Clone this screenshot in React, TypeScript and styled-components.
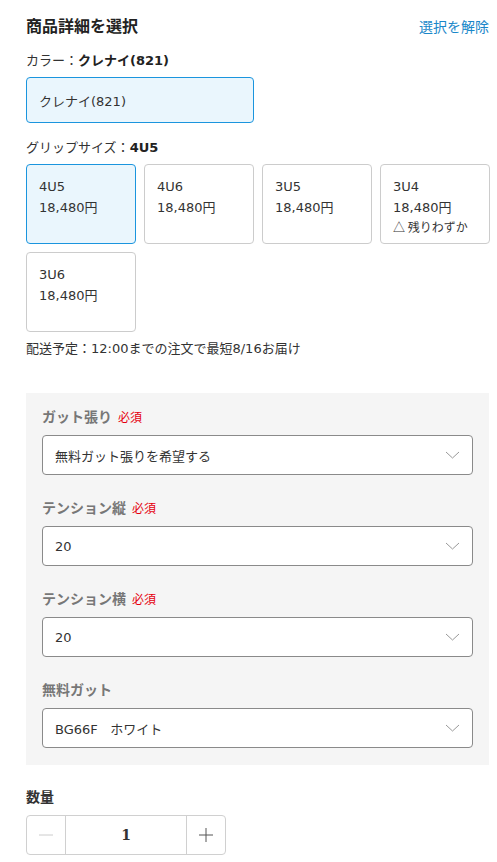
import React from "react";
import styled, { createGlobalStyle } from "styled-components";

const GlobalStyle = createGlobalStyle`
  html, body { margin: 0; padding: 0; background: #fff; }
  body {
    font-family: "DejaVu Sans", "Noto Sans CJK JP", sans-serif;
    color: #333;
    -webkit-font-smoothing: antialiased;
  }
  * { box-sizing: border-box; }
`;

const Page = styled.div`
  width: 497px;
  padding: 16px 8px 8px 26px;
`;

const Header = styled.div`
  display: flex;
  justify-content: space-between;
  align-items: center;
  height: 22px;
`;

const Title = styled.h2`
  margin: 0;
  font-size: 16px;
  line-height: 22px;
  font-weight: 700;
  color: #222;
`;

const ClearLink = styled.a`
  font-size: 14px;
  line-height: 22px;
  color: #1a87c9;
  text-decoration: none;
  cursor: pointer;
`;

const OptionLabel = styled.div<{ $mt: number }>`
  margin-top: ${(p) => p.$mt}px;
  font-size: 13px;
  line-height: 20px;
  color: #333;
  b {
    font-weight: 700;
    color: #222;
  }
`;

const ColorButton = styled.button<{ $selected?: boolean }>`
  display: flex;
  align-items: center;
  margin-top: 6px;
  width: 228px;
  height: 46px;
  padding: 0 12px;
  border: 1px solid ${(p) => (p.$selected ? "#1b95de" : "#ccc")};
  border-radius: 4px;
  background: ${(p) => (p.$selected ? "#eaf6fd" : "#fff")};
  font-family: inherit;
  font-size: 13px;
  color: #333;
  text-align: left;
`;

const CardGrid = styled.div`
  margin-top: 6px;
  display: grid;
  grid-template-columns: repeat(4, 110px);
  grid-auto-rows: 80px;
  gap: 8px;
`;

const Card = styled.div<{ $selected?: boolean }>`
  border: 1px solid ${(p) => (p.$selected ? "#1b95de" : "#ccc")};
  border-radius: 4px;
  background: ${(p) => (p.$selected ? "#eaf6fd" : "#fff")};
  padding: 12px 6px 0 12px;
  font-size: 13px;
  line-height: 19px;
  color: #333;
  display: flex;
  flex-direction: column;
`;

const CardLine = styled.span<{ $gap?: number }>`
  margin-top: ${(p) => p.$gap ?? 0}px;
  white-space: nowrap;
`;

const StockNote = styled.span`
  font-family: "Noto Sans CJK JP", sans-serif;
  font-size: 12px;
  line-height: 19px;
  white-space: nowrap;
`;

const Delivery = styled.div`
  margin-top: 7px;
  font-size: 13px;
  line-height: 20px;
  color: #333;
`;

const Panel = styled.div`
  margin-top: 34px;
  background: #f5f5f5;
  padding: 13px 16px 17px 16px;
  display: flex;
  flex-direction: column;
  gap: 22px;
`;

const Field = styled.div`
  display: flex;
  flex-direction: column;
`;

const FieldLabel = styled.div`
  display: flex;
  align-items: center;
  gap: 6px;
  height: 20px;
  font-size: 14px;
  font-weight: 700;
  color: #777;
`;

const Required = styled.span`
  font-size: 12px;
  font-weight: 400;
  color: #e5000f;
`;

const Select = styled.div`
  margin-top: 9px;
  height: 40px;
  display: flex;
  align-items: center;
  justify-content: space-between;
  padding: 0 12px 0 12px;
  background: #fff;
  border: 1px solid #8a8a8a;
  border-radius: 4px;
  font-size: 13px;
  color: #333;
  white-space: pre;
`;

const Chevron = styled.svg`
  width: 15px;
  height: 8px;
`;

const QtyLabel = styled.div`
  margin-top: 22px;
  font-size: 14px;
  line-height: 20px;
  font-weight: 700;
  color: #333;
`;

const Stepper = styled.div`
  margin-top: 8px;
  width: 200px;
  height: 40px;
  display: grid;
  grid-template-columns: 39px 1fr 39px;
  border: 1px solid #d0d0d0;
  border-radius: 4px;
  overflow: hidden;
`;

const StepButton = styled.div<{ $disabled?: boolean; $side: "left" | "right" }>`
  display: flex;
  align-items: center;
  justify-content: center;
  color: ${(p) => (p.$disabled ? "#ccc" : "#555")};
  ${(p) => (p.$side === "left" ? "border-right: 1px solid #d0d0d0;" : "border-left: 1px solid #d0d0d0;")}
`;

const QtyValue = styled.div`
  display: flex;
  align-items: center;
  justify-content: center;
  font-family: "DejaVu Serif", serif;
  font-size: 14px;
  font-weight: 700;
  color: #333;
`;

const ChevronIcon = () => (
  <Chevron viewBox="0 0 15 8">
    <polyline points="1,1 7.5,7 14,1" fill="none" stroke="#999" strokeWidth="1" />
  </Chevron>
);

const sizes = [
  { name: "4U5", price: "18,480円", selected: true },
  { name: "4U6", price: "18,480円" },
  { name: "3U5", price: "18,480円" },
  { name: "3U4", price: "18,480円", note: "△ 残りわずか" },
  { name: "3U6", price: "18,480円" },
];

const fields = [
  { label: "ガット張り", required: true, value: "無料ガット張りを希望する" },
  { label: "テンション縦", required: true, value: "20" },
  { label: "テンション横", required: true, value: "20" },
  { label: "無料ガット", required: false, value: "BG66F   ホワイト" },
];

export default function App() {
  return (
    <>
      <GlobalStyle />
      <Page>
        <Header>
          <Title>商品詳細を選択</Title>
          <ClearLink>選択を解除</ClearLink>
        </Header>

        <OptionLabel $mt={13}>
          カラー：<b>クレナイ(821)</b>
        </OptionLabel>
        <ColorButton $selected>クレナイ(821)</ColorButton>

        <OptionLabel $mt={15}>
          グリップサイズ：<b>4U5</b>
        </OptionLabel>
        <CardGrid>
          {sizes.map((s) => (
            <Card key={s.name} $selected={s.selected}>
              <CardLine>{s.name}</CardLine>
              <CardLine $gap={2}>{s.price}</CardLine>
              {s.note && <StockNote>{s.note}</StockNote>}
            </Card>
          ))}
        </CardGrid>

        <Delivery>配送予定：12:00までの注文で最短8/16お届け</Delivery>

        <Panel>
          {fields.map((f) => (
            <Field key={f.label}>
              <FieldLabel>
                {f.label}
                {f.required && <Required>必須</Required>}
              </FieldLabel>
              <Select>
                <span>{f.value}</span>
                <ChevronIcon />
              </Select>
            </Field>
          ))}
        </Panel>

        <QtyLabel>数量</QtyLabel>
        <Stepper>
          <StepButton $side="left" $disabled>
            <svg width="16" height="16" viewBox="0 0 16 16">
              <line x1="1" y1="8" x2="15" y2="8" stroke="currentColor" strokeWidth="1" />
            </svg>
          </StepButton>
          <QtyValue>1</QtyValue>
          <StepButton $side="right">
            <svg width="16" height="16" viewBox="0 0 16 16">
              <line x1="1" y1="8" x2="15" y2="8" stroke="currentColor" strokeWidth="1" />
              <line x1="8" y1="1" x2="8" y2="15" stroke="currentColor" strokeWidth="1" />
            </svg>
          </StepButton>
        </Stepper>
      </Page>
    </>
  );
}
